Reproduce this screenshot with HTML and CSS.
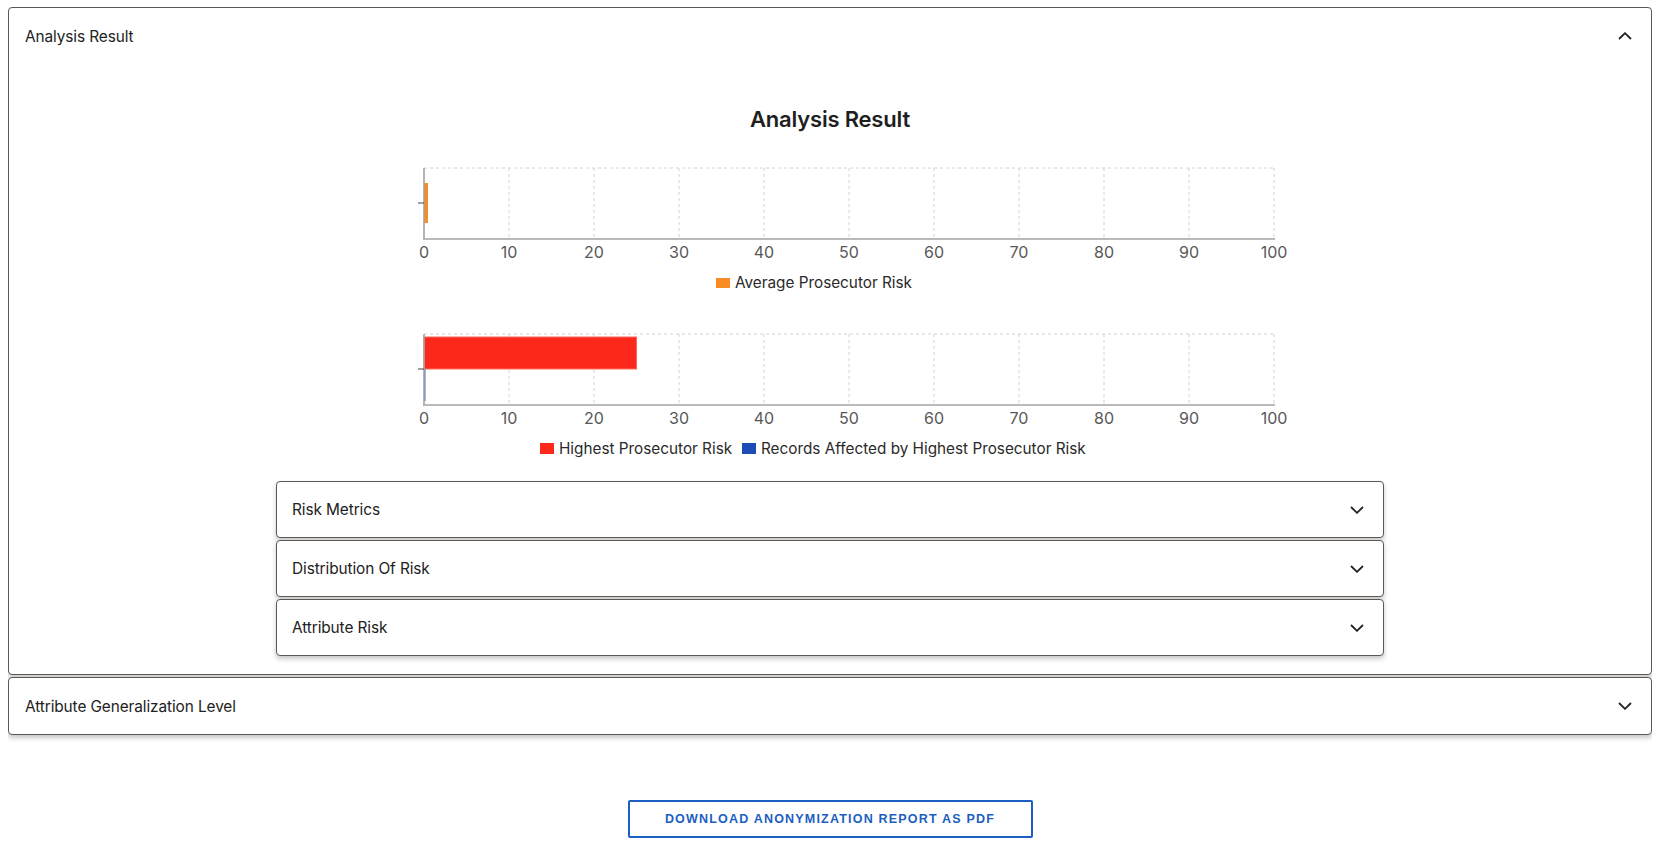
FILE: index.html
```html
<!DOCTYPE html>
<html>
<head>
<meta charset="utf-8">
<link rel="stylesheet" href="styles.css">
</head>
<body>
<div class="page">
  <section class="panel">
    <div class="summary">
      <span class="summary-title">Analysis Result</span>
      <svg class="chev" width="14" height="8" viewBox="0 0 14 8"><path d="M1 7 L7 1.2 L13 7" fill="none" stroke="#222" stroke-width="1.8"/></svg>
    </div>
    <div class="details">
      <h2 class="chart-title">Analysis Result</h2>

      <svg class="chart chart-1" width="1108" height="140" viewBox="0 0 1108 140">
        <g class="grid">
          <line x1="148" y1="14" x2="998" y2="14"/>
          <line x1="233" y1="14" x2="233" y2="85"/>
          <line x1="318" y1="14" x2="318" y2="85"/>
          <line x1="403" y1="14" x2="403" y2="85"/>
          <line x1="488" y1="14" x2="488" y2="85"/>
          <line x1="573" y1="14" x2="573" y2="85"/>
          <line x1="658" y1="14" x2="658" y2="85"/>
          <line x1="743" y1="14" x2="743" y2="85"/>
          <line x1="828" y1="14" x2="828" y2="85"/>
          <line x1="913" y1="14" x2="913" y2="85"/>
          <line x1="998" y1="14" x2="998" y2="85"/>
        </g>
        <rect x="148" y="29" width="4" height="40" fill="#fb8c24"/>
        <g class="axis">
          <line x1="148" y1="14" x2="148" y2="85"/>
          <line x1="147" y1="85" x2="999" y2="85"/>
        </g>
        <line x1="142" y1="49" x2="148" y2="49" stroke="#444" stroke-width="1"/>
        <g class="ticks">
          <text x="148" y="104">0</text>
          <text x="233" y="104">10</text>
          <text x="318" y="104">20</text>
          <text x="403" y="104">30</text>
          <text x="488" y="104">40</text>
          <text x="573" y="104">50</text>
          <text x="658" y="104">60</text>
          <text x="743" y="104">70</text>
          <text x="828" y="104">80</text>
          <text x="913" y="104">90</text>
          <text x="998" y="104">100</text>
        </g>
        <rect x="440" y="124" width="14" height="10" fill="#fb8c24"/>
        <text class="legend" x="459" y="134">Average Prosecutor Risk</text>
      </svg>

      <svg class="chart chart-2" width="1108" height="140" viewBox="0 0 1108 140">
        <g class="grid">
          <line x1="148" y1="14" x2="998" y2="14"/>
          <line x1="233" y1="14" x2="233" y2="85"/>
          <line x1="318" y1="14" x2="318" y2="85"/>
          <line x1="403" y1="14" x2="403" y2="85"/>
          <line x1="488" y1="14" x2="488" y2="85"/>
          <line x1="573" y1="14" x2="573" y2="85"/>
          <line x1="658" y1="14" x2="658" y2="85"/>
          <line x1="743" y1="14" x2="743" y2="85"/>
          <line x1="828" y1="14" x2="828" y2="85"/>
          <line x1="913" y1="14" x2="913" y2="85"/>
          <line x1="998" y1="14" x2="998" y2="85"/>
        </g>
        <rect x="148" y="17" width="212.5" height="32" fill="#fc281c" stroke="#fd6a5c" stroke-width="1"/>
        <rect x="148" y="49" width="1.6" height="32" fill="#5d86d8"/>
        <g class="axis">
          <line x1="148" y1="14" x2="148" y2="85"/>
          <line x1="147" y1="85" x2="999" y2="85"/>
        </g>
        <line x1="142" y1="49" x2="148" y2="49" stroke="#444" stroke-width="1"/>
        <g class="ticks">
          <text x="148" y="104">0</text>
          <text x="233" y="104">10</text>
          <text x="318" y="104">20</text>
          <text x="403" y="104">30</text>
          <text x="488" y="104">40</text>
          <text x="573" y="104">50</text>
          <text x="658" y="104">60</text>
          <text x="743" y="104">70</text>
          <text x="828" y="104">80</text>
          <text x="913" y="104">90</text>
          <text x="998" y="104">100</text>
        </g>
        <rect x="264" y="123" width="14" height="11" fill="#fc281c"/>
        <text class="legend" x="283" y="134">Highest Prosecutor Risk</text>
        <rect x="466" y="123" width="14" height="11" fill="#1d4cb6"/>
        <text class="legend" x="485" y="134">Records Affected by Highest Prosecutor Risk</text>
      </svg>

      <div class="sub-list">
        <div class="sub-panel">
          <span class="summary-title">Risk Metrics</span>
          <svg class="chev" width="14" height="8" viewBox="0 0 14 8"><path d="M1 1 L7 6.8 L13 1" fill="none" stroke="#222" stroke-width="1.8"/></svg>
        </div>
        <div class="sub-panel">
          <span class="summary-title">Distribution Of Risk</span>
          <svg class="chev" width="14" height="8" viewBox="0 0 14 8"><path d="M1 1 L7 6.8 L13 1" fill="none" stroke="#222" stroke-width="1.8"/></svg>
        </div>
        <div class="sub-panel">
          <span class="summary-title">Attribute Risk</span>
          <svg class="chev" width="14" height="8" viewBox="0 0 14 8"><path d="M1 1 L7 6.8 L13 1" fill="none" stroke="#222" stroke-width="1.8"/></svg>
        </div>
      </div>
    </div>
  </section>

  <section class="panel panel-collapsed">
    <div class="summary">
      <span class="summary-title">Attribute Generalization Level</span>
      <svg class="chev" width="14" height="8" viewBox="0 0 14 8"><path d="M1 1 L7 6.8 L13 1" fill="none" stroke="#222" stroke-width="1.8"/></svg>
    </div>
  </section>

  <div class="actions">
    <button class="download-btn">Download Anonymization Report as PDF</button>
  </div>
</div>
</body>
</html>
```

FILE: styles.css
```css
* { box-sizing: border-box; }

html, body {
  background: #ffffff;
}

body {
  margin: 7px 8px;
  font-family: Inter, "Noto Sans", "Liberation Sans", sans-serif;
  color: #222;
}

.page {
  display: flex;
  flex-direction: column;
}

.panel {
  background: #fff;
  border: 1px solid #5d5853;
  border-radius: 4px;
  box-shadow: 0 3px 5px rgba(0, 0, 0, 0.22);
}

.panel + .panel {
  margin-top: 2px;
}

.summary {
  height: 56px;
  display: flex;
  align-items: center;
  justify-content: space-between;
  padding: 0 19px 0 16px;
}

.summary-title {
  font-size: 15.4px;
  color: #222;
  letter-spacing: -0.1px;
}

.chev {
  display: block;
  flex: none;
}

.details {
  display: flex;
  flex-direction: column;
  align-items: center;
  padding-bottom: 18px;
}

.chart-title {
  margin: 43px 0 0;
  font-size: 22px;
  line-height: 24px;
  font-weight: 600;
  color: #1f1f1f;
  letter-spacing: -0.2px;
}

.chart {
  display: block;
}

.chart-1 {
  margin-top: 23px;
}

.chart-2 {
  margin-top: 26px;
}

.grid line {
  stroke: #d2d2d2;
  stroke-width: 1;
  stroke-dasharray: 3 3;
}

.axis line {
  stroke: #a3a3a3;
  stroke-width: 1.6;
}

.ticks text {
  font-family: Inter, "Noto Sans", sans-serif;
  font-size: 16px;
  fill: #585858;
  text-anchor: middle;
}

.legend {
  font-family: Inter, "Noto Sans", sans-serif;
  font-size: 15.3px;
  fill: #2a2a2a;
}

.sub-list {
  width: 1108px;
  margin-top: 21px;
  display: flex;
  flex-direction: column;
  gap: 2px;
}

.sub-panel {
  height: 57px;
  display: flex;
  align-items: center;
  justify-content: space-between;
  padding: 0 19px 0 15px;
  border: 1px solid #5d5853;
  border-radius: 4px;
  background: #fff;
  box-shadow: 0 3px 5px rgba(0, 0, 0, 0.22);
}

.actions {
  display: flex;
  justify-content: center;
  margin-top: 65px;
}

.download-btn {
  width: 405px;
  height: 38px;
  background: #fff;
  border: 2px solid #1c5fc2;
  border-radius: 2px;
  color: #1c5fc2;
  font-family: "Liberation Sans", Arial, sans-serif;
  font-weight: 700;
  font-size: 12.5px;
  letter-spacing: 1.2px;
  text-transform: uppercase;
  padding: 0;
  cursor: pointer;
}
```
